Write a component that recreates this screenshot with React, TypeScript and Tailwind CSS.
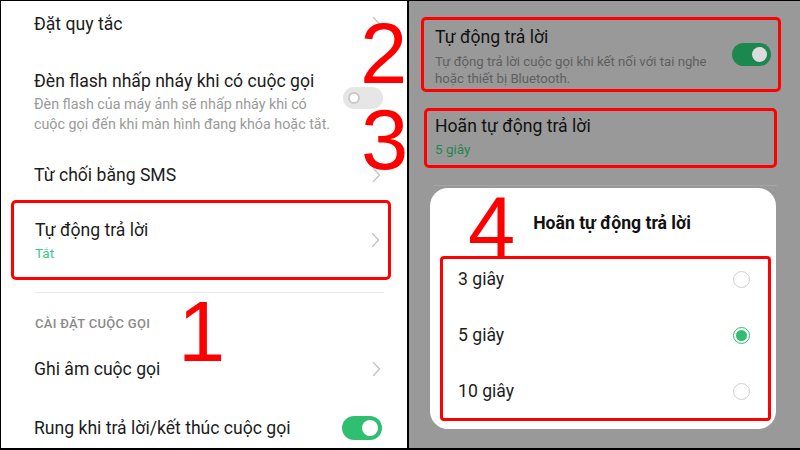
import React from "react";

const font = { fontFamily: "Roboto, 'Noto Sans', sans-serif" };

function Chevron({ color = "#c6c6c6" }: { color?: string }) {
  return (
    <svg width="9" height="16" viewBox="0 0 9 16" fill="none">
      <path d="M1.5 1.5 L7.5 8 L1.5 14.5" stroke={color} strokeWidth="1.4" strokeLinecap="round" strokeLinejoin="round" />
    </svg>
  );
}

function Radio({ checked }: { checked?: boolean }) {
  if (checked) {
    return (
      <div className="w-[17px] h-[17px] rounded-full border-[1.5px] border-[#2fbf71] flex items-center justify-center">
        <div className="w-[11px] h-[11px] rounded-full bg-[#2fbf71]" />
      </div>
    );
  }
  return <div className="w-[17px] h-[17px] rounded-full border-[1.5px] border-[#cfcfcf] bg-white" />;
}

function Digit({ n, className }: { n: string; className: string }) {
  return (
    <div
      className={`absolute text-[85px] leading-none text-[#ff0000] pointer-events-none ${className}`}
      style={{ fontFamily: "'Liberation Sans', Arial, sans-serif" }}
    >
      {n}
    </div>
  );
}

function LeftPanel() {
  return (
    <div className="w-[408px] h-full bg-white border-r-2 border-black overflow-hidden flex flex-col shrink-0">
      {/* Đặt quy tắc */}
      <div className="h-[46px] shrink-0 flex items-center justify-between pl-[33px] pr-[26px]">
        <span className="text-[17.6px] text-[#1c1c1c]">Đặt quy tắc</span>
        <Chevron />
      </div>
      {/* Flash */}
      <div className="h-[110px] shrink-0 flex items-center justify-between pl-[33px] pr-[24px]">
        <div>
          <div className="text-[17.6px] leading-[22px] text-[#1c1c1c]">Đèn flash nhấp nháy khi có cuộc gọi</div>
          <div className="mt-[2px] text-[14.3px] leading-[20px] text-[#9a9a9a]">
            Đèn flash của máy ảnh sẽ nhấp nháy khi có
            <br />
            cuộc gọi đến khi màn hình đang khóa hoặc tắt.
          </div>
        </div>
        <div className="w-[40px] h-[22px] rounded-full bg-[#e6e6e6] flex items-center pl-[5px] -mt-[9px] shrink-0">
          <div className="w-[12px] h-[12px] rounded-full border-2 border-[#c9c9c9] bg-white" />
        </div>
      </div>
      {/* SMS */}
      <div className="h-[36px] shrink-0 flex items-center justify-between pl-[33px] pr-[26px]">
        <span className="text-[17.6px] text-[#1c1c1c]">Từ chối bằng SMS</span>
        <Chevron />
      </div>
      {/* Tự động trả lời (boxed) */}
      <div className="mt-[7px] ml-[10px] w-[380px] h-[80px] shrink-0 border-[3px] border-[#ff0000] rounded-[5px] flex items-center justify-between pl-[21px] pr-[8px]">
        <div>
          <div className="text-[17.6px] leading-[22px] text-[#1c1c1c]">Tự động trả lời</div>
          <div className="mt-[3px] text-[13.5px] leading-[18px] text-[#3cc98a]">Tắt</div>
        </div>
        <Chevron />
      </div>
      <div className="mt-[12px] ml-[34px] w-[349px] h-px bg-[#e8e8e8] shrink-0" />
      {/* Header */}
      <div className="mt-[11px] h-[40px] shrink-0 flex items-center pl-[34px]">
        <span className="text-[13px] font-medium tracking-[0.3px] text-[#8a8a8a]">CÀI ĐẶT CUỘC GỌI</span>
      </div>
      {/* Ghi âm */}
      <div className="h-[50px] shrink-0 flex items-center justify-between pl-[33px] pr-[26px]">
        <span className="text-[17.6px] text-[#1c1c1c]">Ghi âm cuộc gọi</span>
        <Chevron />
      </div>
      {/* Rung */}
      <div className="h-[68px] shrink-0 flex items-center justify-between pl-[33px] pr-[25px]">
        <span className="text-[17.6px] text-[#1c1c1c]">Rung khi trả lời/kết thúc cuộc gọi</span>
        <div className="w-[40px] h-[24px] rounded-full bg-[#2fbf71] flex items-center justify-end pr-[4px] shrink-0">
          <div className="w-[16px] h-[16px] rounded-full bg-white" />
        </div>
      </div>
    </div>
  );
}

function RightPanel() {
  return (
    <div className="flex-1 h-full bg-[#999999] overflow-hidden flex flex-col">
      {/* Box 2 */}
      <div className="mt-[16px] ml-[12px] w-[360px] h-[75px] shrink-0 border-[3px] border-[#ff0000] rounded-[5px] flex items-center justify-between pl-[11px] pr-[7px]">
        <div className="self-start pt-[6px]">
          <div className="text-[17.6px] leading-[22px] text-[#111111]">Tự động trả lời</div>
          <div className="mt-[5px] text-[13.2px] leading-[17px] text-[#5f5f5f]">
            Tự động trả lời cuộc gọi khi kết nối với tai nghe
            <br />
            hoặc thiết bị Bluetooth.
          </div>
        </div>
        <div className="w-[39px] h-[23px] rounded-full bg-[#1d8750] flex items-center justify-end pr-[4px] shrink-0">
          <div className="w-[15px] h-[15px] rounded-full bg-[#dcdcdc]" />
        </div>
      </div>
      {/* Box 3 */}
      <div className="mt-[16px] ml-[15px] w-[353px] h-[60px] shrink-0 border-[3px] border-[#ff0000] rounded-[5px] pl-[8px] pt-[4px]">
        <div className="text-[17.6px] leading-[22px] text-[#111111]">Hoãn tự động trả lời</div>
        <div className="mt-[3px] text-[13.5px] leading-[18px] text-[#23884f]">5 giây</div>
      </div>
      <div className="mt-[17px] ml-[25px] w-[344px] h-px bg-[#a4a4a4] shrink-0" />
      {/* Dialog */}
      <div className="mt-[2px] ml-[21px] w-[346px] h-[241px] shrink-0 bg-white rounded-[18px] flex flex-col">
        <div className="pt-[24px] h-[46px] text-center text-[17.6px] leading-[22px] font-bold text-[#111111] pl-[18px]">
          Hoãn tự động trả lời
        </div>
        <div className="mt-[22px] ml-[10px] w-[331px] h-[165px] border-[3px] border-[#ff0000] rounded-[4px] flex flex-col gap-[16px] pl-[15px] pr-[18px]">
          {[
            { label: "3 giây", checked: false },
            { label: "5 giây", checked: true },
            { label: "10 giây", checked: false },
          ].map((o) => (
            <div key={o.label} className="h-[40px] flex items-center justify-between">
              <span className="text-[17.6px] text-[#1c1c1c]">{o.label}</span>
              <Radio checked={o.checked} />
            </div>
          ))}
        </div>
      </div>
    </div>
  );
}

export default function App() {
  return (
    <div
      className="relative w-[800px] h-[450px] overflow-hidden flex border-l border-t border-b-2 border-black"
      style={font}
    >
      <LeftPanel />
      <RightPanel />
      <Digit n="2" className="left-[359px] top-[10px]" />
      <Digit n="3" className="left-[360px] top-[96px]" />
      <Digit n="1" className="left-[177px] top-[288px]" />
      <Digit n="4" className="left-[467px] top-[183px]" />
    </div>
  );
}
